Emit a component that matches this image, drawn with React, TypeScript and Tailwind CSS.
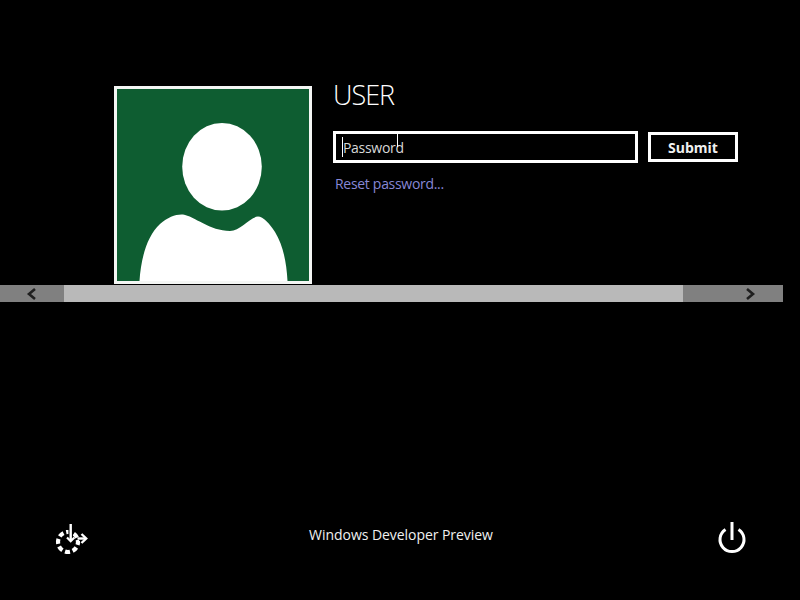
import React from 'react';

const Avatar: React.FC = () => (
  <div className="w-[198px] h-[198px] border-[3px] border-[#f4f6f4] bg-[#0e5d31] shrink-0">
    <svg width="192" height="192" viewBox="117 89 192 192" className="block">
      <ellipse cx="222" cy="166.8" rx="39.8" ry="43.8" fill="#ffffff" />
      <path
        d="M139.5 281 C141 258 147 236 160 224 C168 217 176 214 183 214.5 C194 216 210 231 230 231 C240 231 250 217 258 216.5 C263 216.5 270 224 275 232 C283 245 286.5 262 287.5 281 Z"
        fill="#ffffff"
      />
    </svg>
  </div>
);

const ScrollBar: React.FC = () => (
  <div className="w-[783px] h-[17px] flex bg-[#808080] mt-px">
    <div className="w-[64px] flex items-center pl-[26px]">
      <svg width="11" height="12" viewBox="0 0 11 12">
        <path d="M9 1 L3 6 L9 11" fill="none" stroke="#1f1f1f" strokeWidth="2.6" />
      </svg>
    </div>
    <div className="w-[619px] bg-[#b9b9b9]" />
    <div className="flex-1 flex items-center pl-[62px]">
      <svg width="11" height="12" viewBox="0 0 11 12">
        <path d="M2 1 L8 6 L2 11" fill="none" stroke="#1f1f1f" strokeWidth="2.6" />
      </svg>
    </div>
  </div>
);

const EaseOfAccess: React.FC = () => (
  <svg width="34" height="34" viewBox="0 0 34 34" fill="none" stroke="#ffffff">
    <circle cx="14" cy="20" r="10" strokeWidth="4.2" strokeDasharray="5 2.85" transform="rotate(-12 14 20)" />
    <path d="M16.7 2 V15 M25 16.5 H32" stroke="#000000" strokeWidth="4.5" />
    <path d="M16.7 2 V19" strokeWidth="2.4" />
    <path d="M13 15.5 L16.7 19.2 L20.4 15.5" strokeWidth="2.2" />
    <path d="M23.5 16.5 H32" strokeWidth="2.4" />
    <path d="M27.5 12 L32.2 16.5 L27.5 21" strokeWidth="2.4" />
  </svg>
);

const Power: React.FC = () => (
  <svg width="34" height="34" viewBox="0 0 34 34" fill="none" stroke="#ffffff" strokeWidth="3">
    <path d="M18 0 V18" />
    <path d="M11.5 7.5 A 12 12 0 1 0 24.5 7.5" />
  </svg>
);

export default function App() {
  return (
    <div className="w-[800px] h-[600px] bg-black text-white flex flex-col font-['Open_Sans',sans-serif] overflow-hidden">
      <div className="flex pt-[86px] pl-[114px]">
        <Avatar />
        <div className="ml-[21px] flex flex-col">
          <div className="text-[27px] leading-[17px] font-light tracking-[-1px] h-[45px]">USER</div>
          <div className="flex items-center">
            <div className="relative w-[305px] h-[32px] border-[3px] border-white flex items-center pl-[7px] text-[14px] tracking-[-0.3px] text-[#d8d8d8]">
              Password
              <div className="absolute left-[6px] top-[3px] w-px h-[20px] bg-white" />
              <div className="absolute left-[61px] top-[-3px] w-px h-[16px] bg-white" />
              <div className="absolute left-[58px] top-[-3px] w-[7px] h-px bg-white" />
            </div>
            <button className="ml-[10px] w-[90px] h-[30px] border-[3px] border-white text-[14px] font-bold text-[#f0f0f0] flex items-center justify-center">
              Submit
            </button>
          </div>
          <div className="mt-[11px] pl-[2px] text-[14px] leading-[20px] tracking-[-0.3px] text-[#8787d6]">Reset password...</div>
        </div>
      </div>
      <ScrollBar />
      <div className="flex-1 flex items-start justify-between pl-[54px] pr-[52px] pt-[220px]">
        <EaseOfAccess />
        <div className="text-[14px] leading-[20px] pt-[3px] tracking-[-0.05px] text-[#f0f0f0]">Windows Developer Preview</div>
        <Power />
      </div>
    </div>
  );
}
